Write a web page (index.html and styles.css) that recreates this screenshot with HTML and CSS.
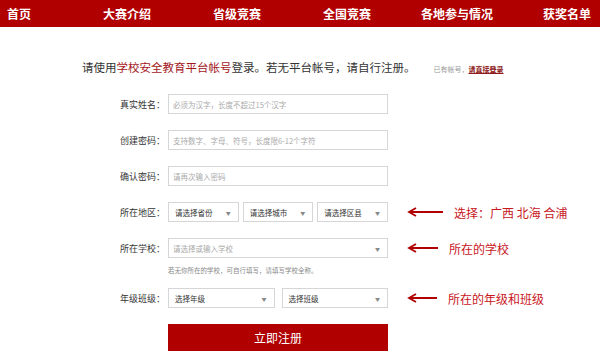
FILE: index.html
```html
<!DOCTYPE html>
<html lang="zh-CN">
<head>
    <meta charset="UTF-8">
    <meta name="viewport" content="width=device-width, initial-scale=1.0">
    <title>注册</title>
    <link rel="stylesheet" href="styles.css">
</head>
<body>
    <nav class="topnav">
        <a href="#" class="nav-home">首页</a>
        <a href="#">大赛介绍</a>
        <a href="#">省级竞赛</a>
        <a href="#">全国竞赛</a>
        <a href="#">各地参与情况</a>
        <a href="#">获奖名单</a>
    </nav>

    <div class="page">
        <p class="intro">请使用<span class="hl">学校安全教育平台帐号</span>登录。若无平台帐号，请自行注册。<span class="login-tip">已有帐号，<a href="#">请直接登录</a></span></p>

        <form class="reg-form">
            <div class="form-row">
                <label class="row-label">真实姓名：</label>
                <div class="field"><input type="text" class="text-input" placeholder="必须为汉字，长度不超过15个汉字"></div>
            </div>
            <div class="form-row">
                <label class="row-label">创建密码：</label>
                <div class="field"><input type="password" class="text-input" placeholder="支持数字、字母、符号，长度限6-12个字符"></div>
            </div>
            <div class="form-row">
                <label class="row-label">确认密码：</label>
                <div class="field"><input type="password" class="text-input" placeholder="请再次输入密码"></div>
            </div>
            <div class="form-row">
                <label class="row-label">所在地区：</label>
                <div class="field">
                    <div class="select"><span>请选择省份</span><span class="caret">▼</span></div>
                    <div class="select"><span>请选择城市</span><span class="caret">▼</span></div>
                    <div class="select"><span>请选择区县</span><span class="caret">▼</span></div>
                </div>
                <div class="note">
                    <svg width="36" height="10" viewBox="0 0 36 10"><path d="M2 5 H36 M9 1 L2 5 L9 9" fill="none" stroke="#b00000" stroke-width="1.8"/></svg>
                    <span>选择：广西 北海 合浦</span>
                </div>
            </div>
            <div class="form-row school-row">
                <label class="row-label">所在学校：</label>
                <div class="field">
                    <div class="select empty"><span>请选择或输入学校</span><span class="caret">▼</span></div>
                </div>
                <div class="note">
                    <svg width="31" height="10" viewBox="0 0 31 10"><path d="M2 5 H31 M9 1 L2 5 L9 9" fill="none" stroke="#b00000" stroke-width="1.8"/></svg>
                    <span>所在的学校</span>
                </div>
            </div>
            <p class="hint">若无你所在的学校，可自行填写，请填写学校全称。</p>
            <div class="form-row">
                <label class="row-label">年级班级：</label>
                <div class="field grade">
                    <div class="select"><span>选择年级</span><span class="caret">▼</span></div>
                    <div class="select"><span>选择班级</span><span class="caret">▼</span></div>
                </div>
                <div class="note">
                    <svg width="30" height="10" viewBox="0 0 30 10"><path d="M2 5 H30 M9 1 L2 5 L9 9" fill="none" stroke="#b00000" stroke-width="1.8"/></svg>
                    <span>所在的年级和班级</span>
                </div>
            </div>
            <button type="submit" class="submit-btn">立即注册</button>
        </form>
    </div>
</body>
</html>
```

FILE: styles.css
```css
body {
    margin: 0;
    font-family: "Noto Sans CJK SC", "Noto Sans", sans-serif;
    background-color: #fff;
    color: #333;
}
.topnav {
    display: grid;
    grid-template-columns: 72px repeat(5, 110px);
    height: 27px;
    background-color: #b00000;
    overflow: hidden;
}
.topnav a {
    color: #fff;
    font-size: 12px;
    font-weight: bold;
    line-height: 27px;
    text-align: center;
    text-decoration: none;
    white-space: nowrap;
}
.topnav .nav-home {
    text-align: left;
    padding-left: 7px;
}
.page {
    padding: 33px 0 0 82px;
}
.intro {
    margin: 0;
    font-size: 11.5px;
    line-height: 14px;
    color: #333;
    white-space: nowrap;
}
.hl {
    color: #a3161c;
}
.login-tip {
    margin-left: 18px;
    font-size: 7px;
    color: #999;
}
.login-tip a {
    color: #8e1a1a;
    font-weight: bold;
}
.reg-form {
    margin: 18px 0 0 3px;
}
.form-row {
    display: flex;
    align-items: center;
    height: 20px;
    margin-bottom: 16px;
}
.row-label {
    width: 80px;
    margin-right: 3px;
    text-align: right;
    font-size: 9px;
    color: #333;
}
.field {
    width: 220px;
    display: flex;
    gap: 4px;
}
.field.grade {
    gap: 7px;
}
.text-input {
    box-sizing: border-box;
    width: 100%;
    height: 20px;
    margin: 0;
    padding: 0 4px;
    border: 1px solid #d6d6d6;
    font-family: inherit;
    font-size: 7.5px;
    outline: none;
}
.text-input::placeholder {
    color: #aaa;
}
.select {
    flex: 1;
    box-sizing: border-box;
    height: 20px;
    padding: 0 7px 0 6px;
    border: 1px solid #d6d6d6;
    display: flex;
    align-items: center;
    justify-content: space-between;
    font-size: 7.5px;
    color: #333;
}
.select.empty {
    color: #aaa;
    padding-left: 4px;
}
.caret {
    font-size: 5px;
    color: #888;
}
.note {
    display: flex;
    align-items: center;
    gap: 11px;
    margin-left: 19px;
    font-size: 12px;
    color: #c8161d;
    white-space: nowrap;
}
.school-row {
    margin-bottom: 0;
}
.hint {
    margin: 8px 0 14px 83px;
    font-size: 6.5px;
    line-height: 8px;
    color: #888;
}
.submit-btn {
    display: block;
    width: 220px;
    height: 27px;
    margin-left: 83px;
    padding: 0;
    border: none;
    background-color: #b00000;
    color: #fff;
    font-family: inherit;
    font-size: 12px;
    cursor: pointer;
}
```
